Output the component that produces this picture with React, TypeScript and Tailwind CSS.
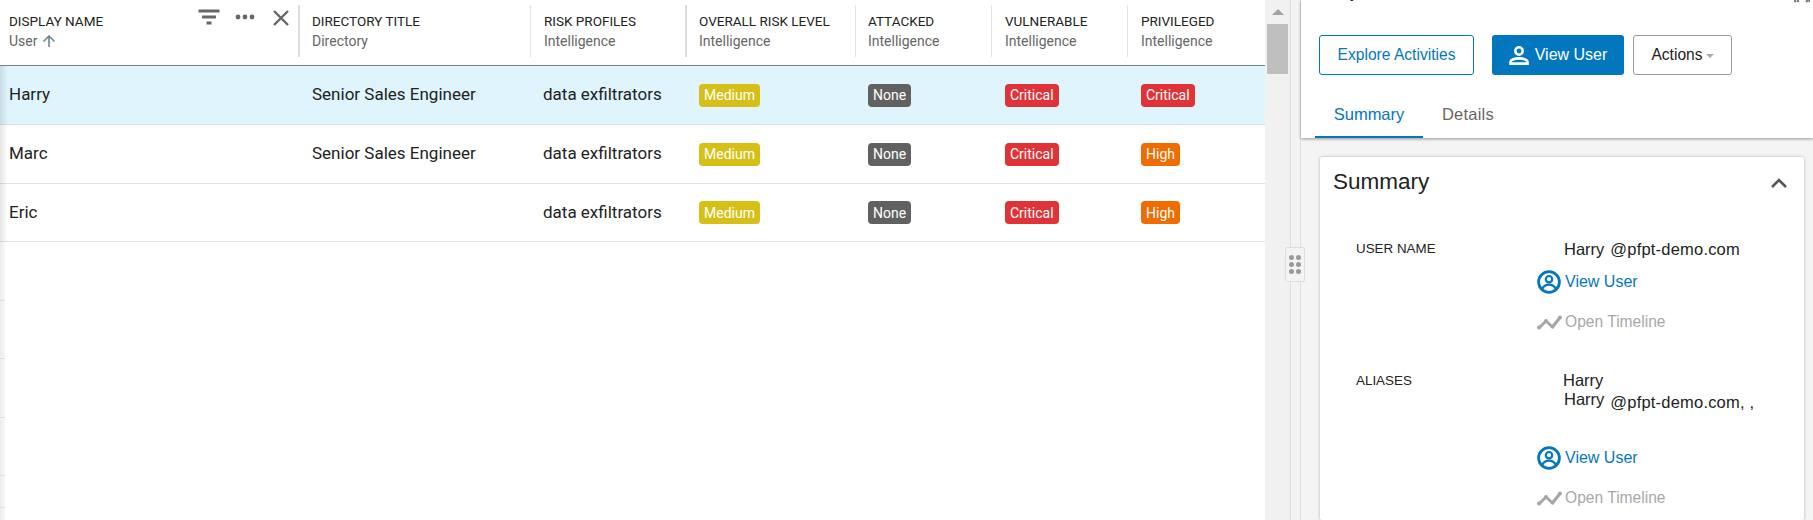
import React from "react";

type Level = "Medium" | "None" | "Critical" | "High";

const columns = [
  { title: "DIRECTORY TITLE", group: "Directory", cell: "pl-[12px] border-l-2 border-[#dcdcdc]" },
  { title: "RISK PROFILES", group: "Intelligence", cell: "pl-[13px] border-l border-[#e2e2e2]" },
  { title: "OVERALL RISK LEVEL", group: "Intelligence", cell: "pl-[12px] border-l-2 border-[#dcdcdc]" },
  { title: "ATTACKED", group: "Intelligence", cell: "pl-[12px] border-l border-[#e2e2e2]" },
  { title: "VULNERABLE", group: "Intelligence", cell: "pl-[13px] border-l border-[#e2e2e2]" },
  { title: "PRIVILEGED", group: "Intelligence", cell: "pl-[13px] border-l border-[#e2e2e2]" },
];

const rows: {
  name: string;
  title: string;
  risk: Level;
  attacked: Level;
  vulnerable: Level;
  privileged: Level;
  className: string;
}[] = [
  {
    name: "Harry",
    title: "Senior Sales Engineer",
    risk: "Medium",
    attacked: "None",
    vulnerable: "Critical",
    privileged: "Critical",
    className: "h-[59px] bg-[#dff4fd] border-[#d9dfe2]",
  },
  {
    name: "Marc",
    title: "Senior Sales Engineer",
    risk: "Medium",
    attacked: "None",
    vulnerable: "Critical",
    privileged: "High",
    className: "h-[59px] bg-white border-[#e2e2e2]",
  },
  {
    name: "Eric",
    title: "",
    risk: "Medium",
    attacked: "None",
    vulnerable: "Critical",
    privileged: "High",
    className: "h-[58px] bg-white border-[#e2e2e2]",
  },
];

const levelColors: Record<Level, string> = {
  Medium: "bg-[#d6bf16]",
  None: "bg-[#616161]",
  Critical: "bg-[#e03338]",
  High: "bg-[#ee6c00]",
};

function Pill({ level }: { level: Level }) {
  return (
    <span
      className={`inline-flex h-[23px] items-center rounded-[4px] px-[5px] text-[14px] leading-none text-white ${levelColors[level]}`}
    >
      {level}
    </span>
  );
}

function UserCircleIcon() {
  return (
    <svg width="24" height="24" viewBox="0 0 24 24" fill="none" stroke="#0277bd" className="shrink-0">
      <circle cx="12" cy="12" r="10.4" strokeWidth="2.8" />
      <circle cx="12" cy="9.2" r="3.2" strokeWidth="2.2" />
      <path d="M5.2 19c1.4-3 4-4.3 6.8-4.3s5.4 1.3 6.8 4.3" strokeWidth="2.2" />
    </svg>
  );
}

function TimelineIcon() {
  return (
    <svg width="25" height="15" viewBox="0 0 25 15" fill="#a6a6a6" stroke="#a6a6a6" className="shrink-0">
      <path d="M2 13 9 6l6.5 6L23 2.5" fill="none" strokeWidth="3" strokeLinejoin="round" />
      <circle cx="2" cy="12.6" r="2" stroke="none" />
      <circle cx="9" cy="6" r="2" stroke="none" />
      <circle cx="15.5" cy="11.6" r="2" stroke="none" />
      <circle cx="23" cy="2.5" r="2" stroke="none" />
    </svg>
  );
}

function UserLinks({ gap }: { gap: string }) {
  return (
    <div className={`flex flex-col ${gap}`}>
      <div className="flex h-[24px] items-center gap-[4px] text-[16px] text-[#0277bd]">
        <UserCircleIcon />
        <span>View User</span>
      </div>
      <div className="flex h-[24px] items-center gap-[3px] text-[15.6px] text-[#a8a8a8]">
        <TimelineIcon />
        <span>Open Timeline</span>
      </div>
    </div>
  );
}

export default function App() {
  return (
    <div className="relative flex h-[520px] w-[1813px] overflow-hidden bg-white font-['Roboto',sans-serif]">
      {/* Users table */}
      <div className="relative flex w-[1265px] shrink-0 flex-col">
        <div className="grid h-[66px] grid-cols-[298px_232px_155px_170px_136px_136px_138px] border-b border-[#7b8185] pt-[5px]">
          <div className="flex h-[52px] justify-between pl-[9px]">
            <div className="pt-[6px]">
              <div className="text-[13.5px] leading-[20px] text-[#222]">DISPLAY NAME</div>
              <div className="flex h-[20px] items-center gap-[5px] text-[14px] text-[#666]">
                User
                <svg width="14" height="12" viewBox="0 0 14 12" fill="none" stroke="#6d8392" strokeWidth="1.6">
                  <path d="M7 12V1M1.5 6.5 7 1l5.5 5.5" />
                </svg>
              </div>
            </div>
            <div className="flex h-[30px] items-start gap-[16px] pr-[9px] pt-[4px]">
              <svg width="22" height="16" viewBox="0 0 22 16" fill="#666" className="mr-[-1px]">
                <rect x="0.5" y="0.5" width="21" height="3" />
                <rect x="4" y="6.5" width="14" height="3" />
                <rect x="8.5" y="12.5" width="5" height="3" />
              </svg>
              <svg width="20" height="16" viewBox="0 0 20 16" fill="#666">
                <circle cx="3" cy="8" r="2.4" />
                <circle cx="10" cy="8" r="2.4" />
                <circle cx="17" cy="8" r="2.4" />
              </svg>
              <svg width="16" height="16" viewBox="0 0 16 16" stroke="#666" strokeWidth="2.4" className="ml-[2px] mt-[1px]">
                <path d="M1 1l14 14M15 1 1 15" />
              </svg>
            </div>
          </div>
          {columns.map((col) => (
            <div key={col.title} className={`h-[52px] pt-[6px] ${col.cell}`}>
              <div className="text-[13.5px] leading-[20px] text-[#222]">{col.title}</div>
              <div className="text-[14px] leading-[20px] text-[#666]">{col.group}</div>
            </div>
          ))}
        </div>

        {rows.map((row) => (
          <div
            key={row.name}
            className={`grid grid-cols-[298px_232px_155px_170px_136px_136px_138px] items-center border-b text-[17px] text-[#222] ${row.className}`}
          >
            <div className="pl-[9px]">{row.name}</div>
            <div className="pl-[14px]">{row.title}</div>
            <div className="pl-[13px]">data exfiltrators</div>
            <div className="pl-[14px]">
              <Pill level={row.risk} />
            </div>
            <div className="pl-[13px]">
              <Pill level={row.attacked} />
            </div>
            <div className="pl-[14px]">
              <Pill level={row.vulnerable} />
            </div>
            <div className="pl-[14px]">
              <Pill level={row.privileged} />
            </div>
          </div>
        ))}

        {/* left edge, what remains of the list behind */}
        <div className="flex flex-1">
          <div className="w-[5px] bg-linear-to-r from-[#ececec] to-[#f8f8f8]">
            <div className="h-[59px] border-b border-[#dcdcdc]" />
            <div className="h-[58px] border-b border-[#dcdcdc]" />
            <div className="h-[59px] border-b border-[#dcdcdc]" />
            <div className="h-[58px] border-b border-[#dcdcdc]" />
            <div className="h-[32px] border-b border-[#dcdcdc]" />
          </div>
        </div>

        <div className="absolute left-0 top-[66px] h-[176px] w-[8px] bg-linear-to-r from-black/10 to-transparent" />
      </div>

      {/* Scrollbar */}
      <div className="flex w-[25px] shrink-0 flex-col items-center bg-[#f1f1f1] pt-[9px]">
        <div className="h-0 w-0 border-x-[6px] border-b-[6px] border-x-transparent border-b-[#a3a3a3]" />
        <div className="mt-[9px] h-[50px] w-[21px] bg-[#bfbfbf]" />
      </div>

      {/* Splitter gutter */}
      <div className="w-[11px] shrink-0 border-x border-[#dedede] bg-[#f3f3f3]" />

      {/* Detail panel */}
      <div className="flex min-w-0 flex-1 flex-col bg-[#f4f4f4] font-['Liberation_Sans',sans-serif]">
        <div className="relative z-10 h-[138px] shrink-0 bg-white pl-[18px] shadow-[0_1px_3px_rgba(0,0,0,0.4)]">
          <div className="mt-[-17px] h-[20px] text-[16px] leading-[20px] text-[#222]">Harry</div>
          <svg width="16" height="3" viewBox="0 0 16 3" stroke="#777" strokeWidth="2" className="absolute right-[3px] top-0">
            <path d="M0 0l2 2M4 2l0-2M12 2l2-2M15 0l1 2" />
          </svg>
          <div className="mt-[32px] flex h-[40px] items-stretch text-[15.6px]">
            <div className="flex w-[155px] items-center justify-center rounded-[3px] border border-[#0277bd] text-[#0277bd]">
              Explore Activities
            </div>
            <div className="ml-[18px] flex w-[132px] items-center justify-center gap-[6px] rounded-[3px] bg-[#0277bd] text-[16px] text-white">
              <svg width="20" height="19" viewBox="0 0 20 19" fill="none" stroke="white" strokeWidth="2.6">
                <circle cx="10" cy="5" r="3.7" />
                <path d="M1.5 17.6v-1.8c0-1.8 3.5-3.4 8.5-3.4s8.5 1.6 8.5 3.4v1.8z" />
              </svg>
              View User
            </div>
            <div className="ml-[9px] flex w-[99px] items-center justify-center gap-[3px] rounded-[3px] border border-[#999] text-[#222]">
              Actions
              <span className="mt-[2px] h-0 w-0 border-x-[4px] border-t-[4px] border-x-transparent border-t-[#aaa]" />
            </div>
          </div>
          <div className="ml-[-4px] mt-[18px] flex h-[45px] text-[16.5px]">
            <div className="flex w-[108px] items-center justify-center border-b-2 border-[#0277bd] text-[#0277bd]">
              Summary
            </div>
            <div className="ml-[19px] flex items-center pb-[2px] tracking-[0.2px] text-[#666]">Details</div>
          </div>
        </div>

        <div className="ml-[19px] mr-[9px] mt-[19px] flex-1 rounded-[2px] bg-white shadow-[0_0_3px_rgba(0,0,0,0.3)]">
          <div className="flex h-[50px] items-center justify-between pl-[13px] pr-[17px] text-[22.5px] text-[#222]">
            Summary
            <svg width="16" height="10" viewBox="0 0 16 10" fill="none" stroke="#555" strokeWidth="2.6" className="mt-[2px]">
              <path d="M1 9l7-7 7 7" />
            </svg>
          </div>

          <div className="mt-[32px] grid grid-cols-[181px_1fr] pl-[36px]">
            <div className="text-[13.4px] leading-[20px] text-[#222]">USER NAME</div>
            <div>
              <div className="flex pl-[27px] text-[16.5px] leading-[20px] text-[#222]">
                <span>Harry</span>
                <span className="ml-[6px] tracking-[0.2px]">@pfpt-demo.com</span>
              </div>
              <div className="mt-[11px]">
                <UserLinks gap="gap-[16px]" />
              </div>
            </div>

            <div className="mt-[37px] text-[13.4px] leading-[20px] text-[#222]">ALIASES</div>
            <div className="mt-[37px]">
              <div className="pl-[26px] text-[16.5px] leading-[19px] text-[#222]">Harry</div>
              <div className="flex pl-[27px] text-[16.5px] leading-[19px] text-[#222]">
                <span>Harry</span>
                <span className="ml-[6px] mt-[3px] tracking-[0.2px]">@pfpt-demo.com, ,</span>
              </div>
              <div className="mt-[34px]">
                <UserLinks gap="gap-[16px]" />
              </div>
            </div>
          </div>
        </div>
      </div>

      {/* Splitter handle */}
      <div className="absolute left-[1285px] top-[247px] z-20 grid h-[35px] w-[20px] grid-cols-2 content-center justify-items-center gap-y-[2px] rounded-[2px] border border-[#dedede] bg-[#f3f3f3] px-[2px]">
        {[0, 1, 2, 3, 4, 5].map((dot) => (
          <span key={dot} className="h-[5px] w-[5px] rounded-full bg-[#9a9a9a]" />
        ))}
      </div>
    </div>
  );
}
